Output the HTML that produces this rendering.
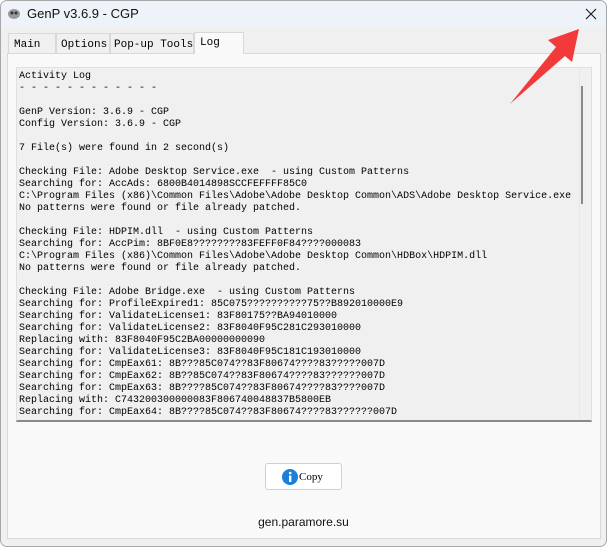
<!DOCTYPE html>
<html><head><style>
body{margin:0;width:607px;height:547px;overflow:hidden;background:#fff;font-family:"Liberation Sans",sans-serif;position:relative}
.win{position:absolute;left:0;top:0;width:605px;height:545px;border:1px solid #a8a8a8;border-radius:7px;background:#f0f0f0;overflow:hidden}
.title{position:absolute;left:0;top:0;width:605px;height:26px;background:#eef3f9}
.title span{position:absolute;left:26px;top:5px;font-size:13px;color:#111}
.tab{position:absolute;top:32px;height:20px;border:1px solid #d8d8d8;border-bottom:none;background:#f0f0f0;font-family:"Liberation Mono",monospace;font-size:11px;line-height:22px;padding-left:5px;box-sizing:border-box;white-space:nowrap;overflow:hidden}
.panel{position:absolute;left:6px;top:52px;width:594px;height:486px;border:1px solid #d8d8d8;background:#f9f9f9;box-sizing:border-box}
.log{position:absolute;left:15px;top:66px;width:576px;height:355px;border:1px solid #e0e0e0;border-bottom:2px solid #8a8a8a;background:#f0f0f0;box-sizing:border-box;overflow:hidden}
.log pre{margin:0;position:absolute;left:2px;top:3px;font-family:"Liberation Mono",monospace;font-size:10px;line-height:12px;color:#000}
.sb{position:absolute;left:562px;top:0;width:13px;height:355px;border-left:1px solid #e6e6e6}
.thumb{position:absolute;left:580px;top:85px;width:2px;height:118px;background:#888}
.btn{position:absolute;left:264px;top:462px;width:77px;height:27px;border:1px solid #d0d0d0;border-radius:3px;background:#fff;box-sizing:border-box}
</style></head><body>
<div class="win">
<div class="title"><svg style="position:absolute;left:6px;top:7px" width="14" height="12"><ellipse cx="7" cy="6" rx="6" ry="5" fill="#999"/><circle cx="5" cy="5" r="1.5" fill="#333"/><circle cx="9" cy="5" r="1.5" fill="#333"/></svg><span>GenP v3.6.9 - CGP</span>
<svg style="position:absolute;left:584px;top:7px" width="12" height="12"><path d="M1 1L11 11M11 1L1 11" stroke="#222" stroke-width="1.2"/></svg></div>
<div class="panel"></div>
<div class="tab" style="left:7px;width:48px">Main</div>
<div class="tab" style="left:55px;width:54px;padding-left:4px">Options</div>
<div class="tab" style="left:109px;width:84px;padding-left:3px">Pop-up Tools</div>
<div class="tab" style="left:193px;width:50px;top:31px;height:22px;background:#f9f9f9;line-height:20px">Log</div>
<div class="log"><pre>Activity Log
- - - - - - - - - - - -

GenP Version: 3.6.9 - CGP
Config Version: 3.6.9 - CGP

7 File(s) were found in 2 second(s)

Checking File: Adobe Desktop Service.exe  - using Custom Patterns
Searching for: AccAds: 6800B4014898SCCFEFFFF85C0
C:\Program Files (x86)\Common Files\Adobe\Adobe Desktop Common\ADS\Adobe Desktop Service.exe
No patterns were found or file already patched.

Checking File: HDPIM.dll  - using Custom Patterns
Searching for: AccPim: 8BF0E8????????83FEFF0F84????000083
C:\Program Files (x86)\Common Files\Adobe\Adobe Desktop Common\HDBox\HDPIM.dll
No patterns were found or file already patched.

Checking File: Adobe Bridge.exe  - using Custom Patterns
Searching for: ProfileExpired1: 85C075??????????75??B892010000E9
Searching for: ValidateLicense1: 83F80175??BA94010000
Searching for: ValidateLicense2: 83F8040F95C281C293010000
Replacing with: 83F8040F95C2BA00000000090
Searching for: ValidateLicense3: 83F8040F95C181C193010000
Searching for: CmpEax61: 8B???85C074??83F80674????83?????007D
Searching for: CmpEax62: 8B??85C074??83F80674????83??????007D
Searching for: CmpEax63: 8B????85C074??83F80674????83????007D
Replacing with: C743200300000083F806740048837B5800EB
Searching for: CmpEax64: 8B????85C074??83F80674????83??????007D</pre><div class="sb"></div></div>
<div class="thumb"></div>
<div class="btn"><svg style="position:absolute;left:16px;top:5px" width="16" height="16"><circle cx="8" cy="8" r="8" fill="#1a7fd6"/><rect x="7" y="6.5" width="2.4" height="6.5" fill="#fff"/><circle cx="8.2" cy="4" r="1.3" fill="#fff"/></svg><span style="position:absolute;left:33px;top:7px;font-family:'Liberation Serif',serif;font-size:11px">Copy</span></div>
<div style="position:absolute;left:0;width:605px;top:514px;text-align:center;font-size:12px;color:#111">gen.paramore.su</div>
</div>
<svg style="position:absolute;left:0;top:0" width="607" height="547"><polygon points="579,29 572,62 565,56 510,104 556,47 548,40" fill="#f23a3a"/></svg>
</body></html>
